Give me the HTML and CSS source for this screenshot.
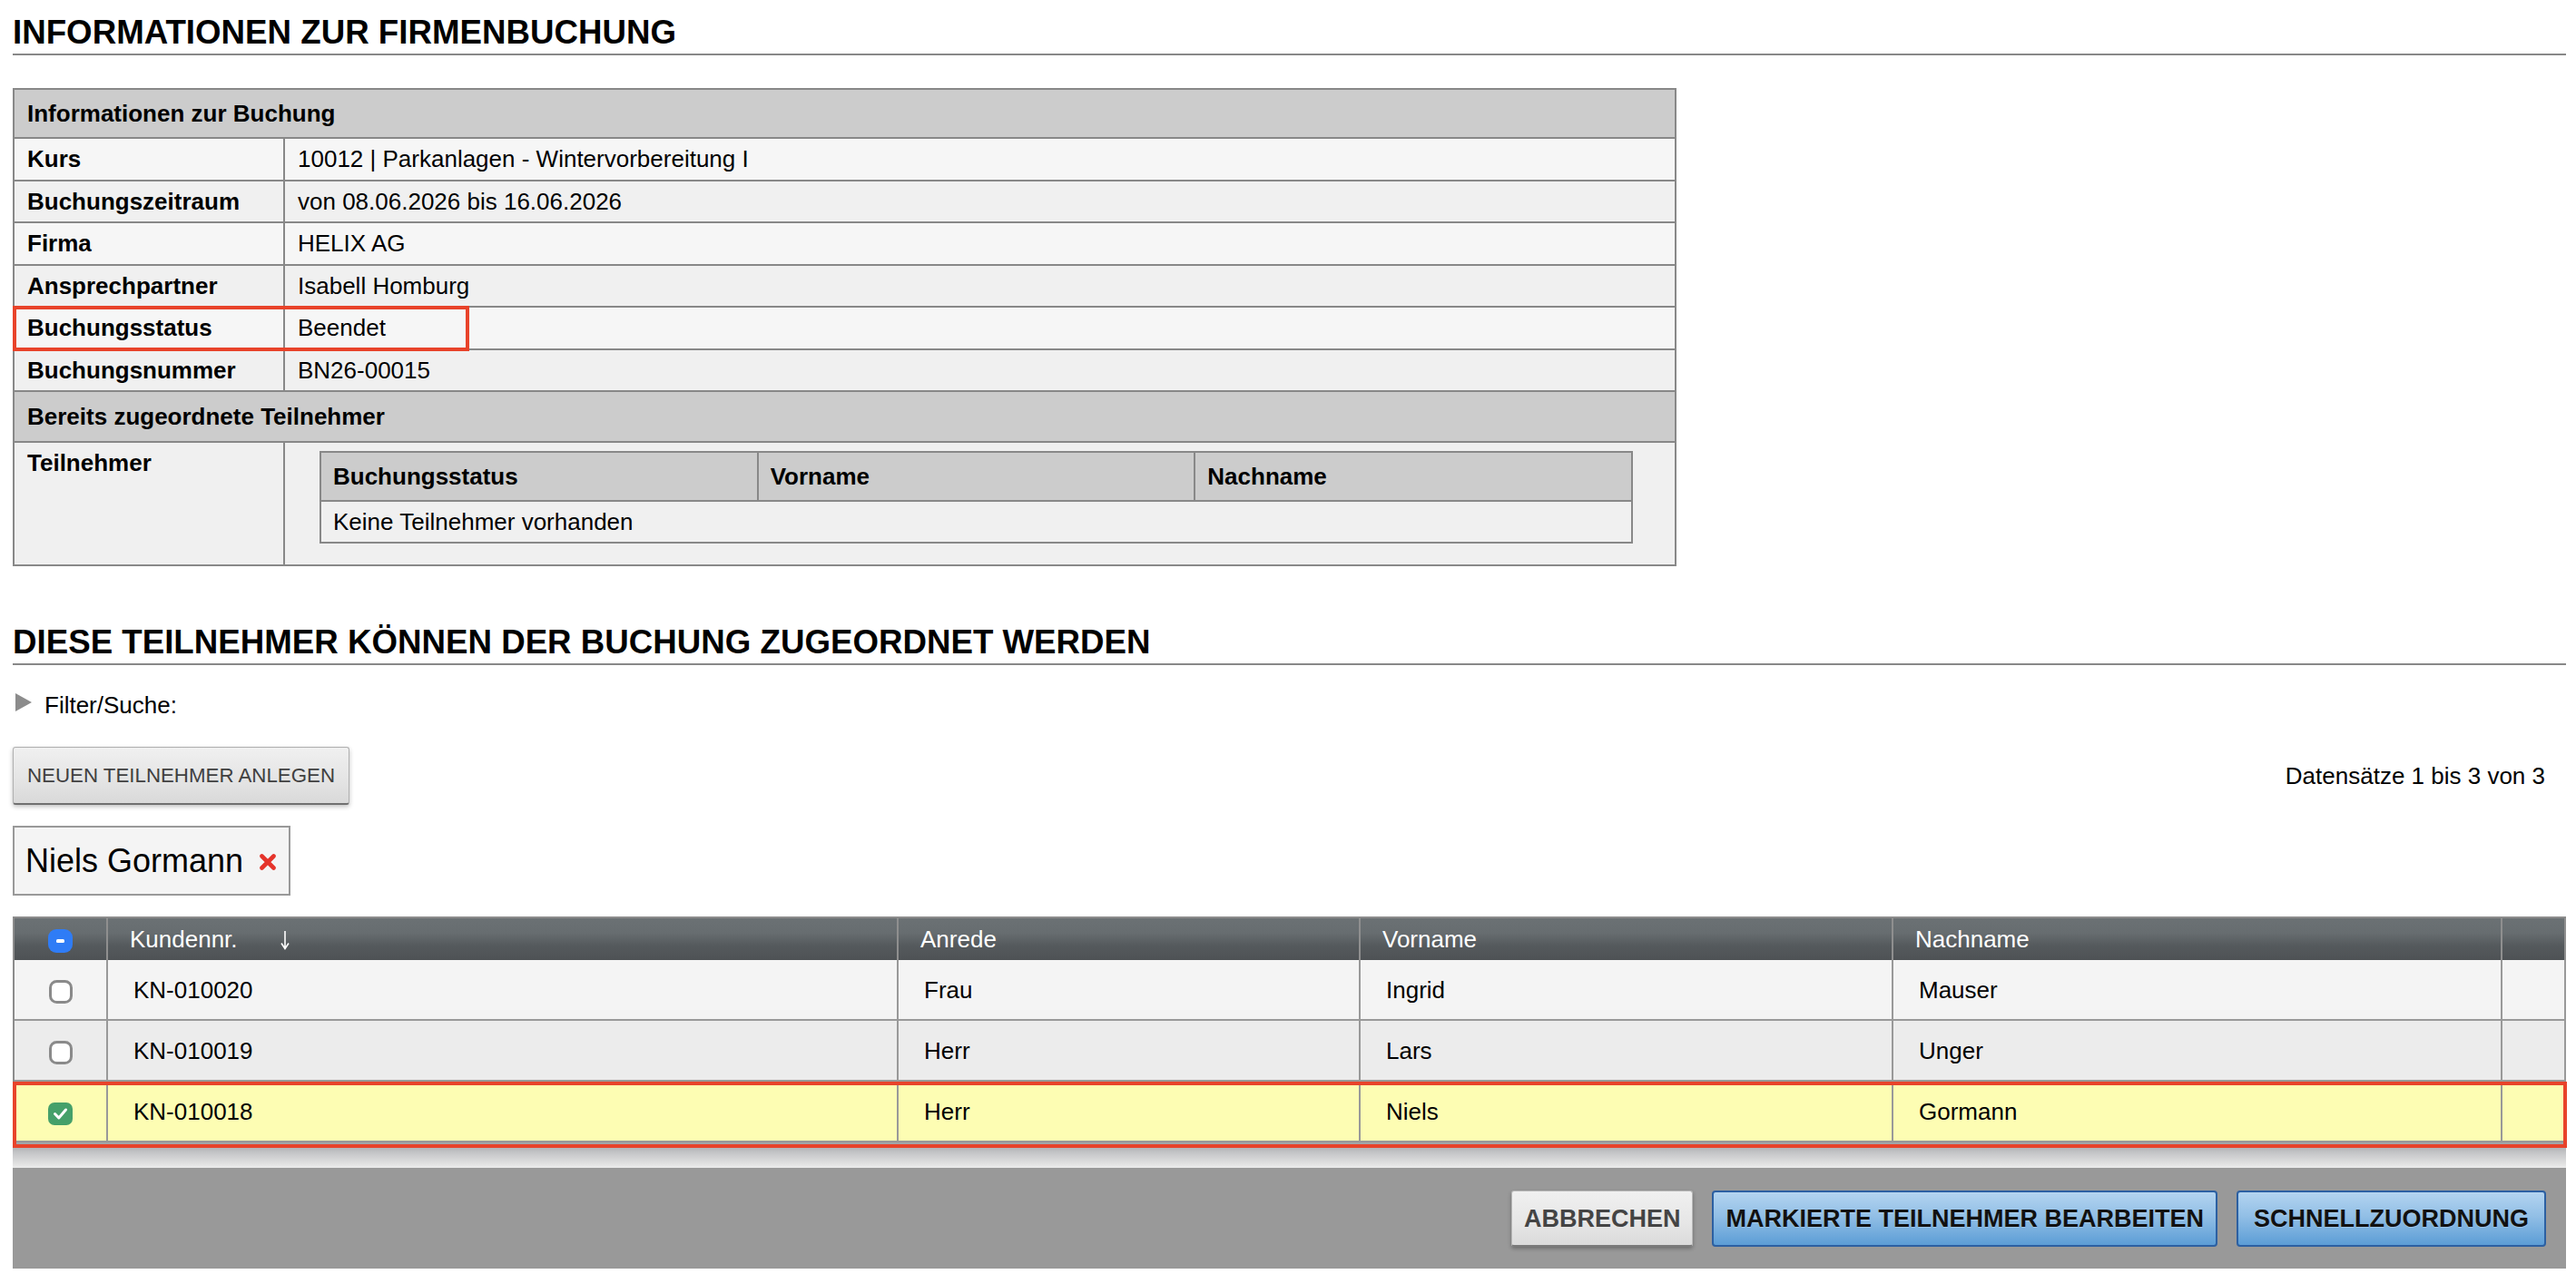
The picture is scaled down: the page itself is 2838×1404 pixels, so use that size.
FILE: index.html
```html
<!DOCTYPE html>
<html lang="de">
<head>
<meta charset="utf-8">
<title>Informationen zur Firmenbuchung</title>
<link rel="stylesheet" href="styles.css">
</head>
<body>
<div class="page">
  <h1 class="section-title">INFORMATIONEN ZUR FIRMENBUCHUNG</h1>

  <div class="info-wrap">
    <table class="info">
      <colgroup><col class="col-label"><col class="col-value"></colgroup>
      <tr class="head head-1"><th colspan="2">Informationen zur Buchung</th></tr>
      <tr class="row-a"><th>Kurs</th><td>10012 | Parkanlagen - Wintervorbereitung I</td></tr>
      <tr class="row-b"><th>Buchungszeitraum</th><td>von 08.06.2026 bis 16.06.2026</td></tr>
      <tr class="row-a"><th>Firma</th><td>HELIX AG</td></tr>
      <tr class="row-b"><th>Ansprechpartner</th><td>Isabell Homburg</td></tr>
      <tr class="row-a"><th>Buchungsstatus</th><td>Beendet</td></tr>
      <tr class="row-b"><th>Buchungsnummer</th><td>BN26-00015</td></tr>
      <tr class="head head-2"><th colspan="2">Bereits zugeordnete Teilnehmer</th></tr>
      <tr class="row-b participants">
        <th>Teilnehmer</th>
        <td class="participants-cell">
          <table class="inner">
            <tr class="inner-head"><th>Buchungsstatus</th><th>Vorname</th><th>Nachname</th></tr>
            <tr><td colspan="3">Keine Teilnehmer vorhanden</td></tr>
          </table>
        </td>
      </tr>
    </table>
    <div class="mark mark-status"></div>
  </div>

  <h2 class="section-title second">DIESE TEILNEHMER KÖNNEN DER BUCHUNG ZUGEORDNET WERDEN</h2>

  <div class="filter">
    <svg class="tri" width="18" height="20" viewBox="0 0 18 20"><polygon points="0,0 18,10 0,20" fill="#8c8c8c"/></svg>
    <span>Filter/Suche:</span>
  </div>

  <div class="toolbar">
    <button class="btn-light">NEUEN TEILNEHMER ANLEGEN</button>
    <span class="count">Datensätze 1 bis 3 von 3</span>
  </div>

  <div class="chip">
    <span>Niels Gormann</span>
    <svg class="chip-x" width="18" height="18" viewBox="0 0 18 18"><path d="M2.5 2.5 L15.5 15.5 M15.5 2.5 L2.5 15.5" stroke="#e5332a" stroke-width="4.6" stroke-linecap="round"/></svg>
  </div>

  <div class="grid-wrap">
    <table class="grid">
      <colgroup>
        <col class="g-c1"><col class="g-c2"><col class="g-c3"><col class="g-c4"><col class="g-c5"><col class="g-c6">
      </colgroup>
      <tr class="grid-head">
        <th class="cb"><svg width="27" height="26" viewBox="0 0 27 26"><rect x="0" y="0" width="27" height="26" rx="9" fill="#2f7cf6"/><rect x="9" y="11" width="9" height="4" rx="1.5" fill="#fff"/></svg></th>
        <th>Kundennr.<svg class="sort" width="12" height="22" viewBox="0 0 12 22"><path d="M6 1 V20 M2 14.5 L6 20.5 L10 14.5" stroke="#fff" stroke-width="1.6" fill="none"/></svg></th>
        <th>Anrede</th>
        <th>Vorname</th>
        <th>Nachname</th>
        <th></th>
      </tr>
      <tr class="g-row1">
        <td class="cb"><svg width="26" height="26" viewBox="0 0 26 26"><rect x="1.5" y="1.5" width="23" height="23" rx="7" fill="#fff" stroke="#8a8a8a" stroke-width="3"/></svg></td>
        <td>KN-010020</td><td>Frau</td><td>Ingrid</td><td>Mauser</td><td></td>
      </tr>
      <tr class="g-row2">
        <td class="cb"><svg width="26" height="26" viewBox="0 0 26 26"><rect x="1.5" y="1.5" width="23" height="23" rx="7" fill="#fff" stroke="#8a8a8a" stroke-width="3"/></svg></td>
        <td>KN-010019</td><td>Herr</td><td>Lars</td><td>Unger</td><td></td>
      </tr>
      <tr class="g-row3">
        <td class="cb"><svg width="27" height="25" viewBox="0 0 27 25"><rect x="0" y="0" width="27" height="25" rx="7" fill="#45a06a"/><path d="M7.5 12.5 L11.8 17 L19.5 8" stroke="#fff" stroke-width="3" fill="none" stroke-linecap="round" stroke-linejoin="round"/></svg></td>
        <td>KN-010018</td><td>Herr</td><td>Niels</td><td>Gormann</td><td></td>
      </tr>
    </table>
    <div class="mark mark-row"></div>
  </div>
  <div class="grid-shadow"></div>

  <div class="footer">
    <button class="btn-foot btn-grey">ABBRECHEN</button>
    <button class="btn-foot btn-blue">MARKIERTE TEILNEHMER BEARBEITEN</button>
    <button class="btn-foot btn-blue btn-wide">SCHNELLZUORDNUNG</button>
  </div>
</div>
</body>
</html>
```

FILE: styles.css
```css
* { box-sizing: border-box; }

body {
  margin: 0;
  background: #fff;
  color: #000;
  font-family: "Liberation Sans", Arial, Helvetica, sans-serif;
  font-size: 26px;
}

.page {
  padding: 0 11px 7px 14px;
}

.section-title {
  font-size: 36.7px;
  font-weight: bold;
  line-height: 42px;
  margin: 15px 0 0;
  padding-bottom: 2px;
  border-bottom: 2px solid #888;
}

.section-title.second {
  margin-top: 63px;
}

/* ---------- info table ---------- */
.info-wrap {
  position: relative;
  width: 1833px;
  margin-top: 36px;
}

.info {
  width: 1833px;
  table-layout: fixed;
  border-collapse: separate;
  border-spacing: 0;
  border-top: 2px solid #888;
  border-left: 2px solid #888;
}

.col-label { width: 298px; }

.info th,
.info td {
  border-right: 2px solid #888;
  border-bottom: 2px solid #888;
  text-align: left;
  vertical-align: middle;
  line-height: 30px;
  padding: 7.25px 14px;
  font-size: 26px;
}

.info th { font-weight: bold; }
.info td { font-weight: normal; }

.info .head th { background: #ccc; padding: 11px 14px; }
.info .head-2 th { padding: 12px 14px; }

.row-a th, .row-a td { background: #f6f6f6; }
.row-b th, .row-b td { background: #f0f0f0; }

.info .participants th { vertical-align: top; }
.info .participants-cell {
  vertical-align: top;
  padding: 9px 46px 23px 38px;
}

.inner {
  width: 100%;
  table-layout: fixed;
  border-collapse: separate;
  border-spacing: 0;
  border-top: 2px solid #888;
  border-left: 2px solid #888;
}

.info .inner th,
.info .inner td {
  border-right: 2px solid #888;
  border-bottom: 2px solid #888;
  padding: 7px 13px;
  line-height: 30px;
  background: #f0f0f0;
}

.info .inner .inner-head th {
  background: #ccc;
  padding: 11px 13px;
}

.mark {
  position: absolute;
  border: 4px solid #e8432a;
  pointer-events: none;
}

.mark-status {
  left: 0;
  top: 240px;
  width: 503px;
  height: 50px;
}

/* ---------- filter / toolbar ---------- */
.filter {
  display: flex;
  align-items: center;
  margin-top: 29px;
  line-height: 30px;
}

.filter .tri {
  margin: 0 14px 0 3px;
  position: relative;
  top: -3px;
}

.toolbar {
  display: flex;
  align-items: center;
  justify-content: space-between;
  margin-top: 31px;
  padding-right: 23px;
}

.btn-light {
  font-family: "Liberation Sans", Arial, sans-serif;
  font-size: 22.3px;
  color: #404040;
  line-height: 26px;
  height: 64px;
  padding: 0 12px;
  border: 1px solid #b0b0b0;
  border-bottom: 2px solid #707070;
  border-radius: 3px;
  background: linear-gradient(#f0f0f0, #e4e4e4 60%, #d9d9d9);
  box-shadow: 0 2px 5px rgba(0,0,0,0.25);
  width: 371px;
}

.count {
  line-height: 30px;
}

.chip {
  display: inline-flex;
  align-items: center;
  margin-top: 23px;
  border: 2px solid #999;
  background: #f4f4f4;
  font-size: 36px;
  line-height: 42px;
  padding: 16px 14px 15px 12px;
}

.chip-x {
  margin-left: 18px;
  position: relative;
  top: 1px;
}

/* ---------- grid ---------- */
.grid-wrap {
  position: relative;
  margin-top: 23px;
}

.grid {
  width: 2813px;
  table-layout: fixed;
  border-collapse: separate;
  border-spacing: 0;
  border-top: 2px solid #8c8c8c;
  border-left: 2px solid #8c8c8c;
}

.g-c1 { width: 103px; }
.g-c2 { width: 871px; }
.g-c3 { width: 509px; }
.g-c4 { width: 587px; }
.g-c5 { width: 671px; }
.g-c6 { width: 70px; }

.grid th {
  background: linear-gradient(#6b7174 0%, #676d70 35%, #555a5d 65%, #4e5255 100%);
  color: #fff;
  font-weight: normal;
  text-align: left;
  line-height: 30px;
  padding: 8px 24px;
  border-right: 2px solid #8f8f8f;
  white-space: nowrap;
}

.grid th.cb,
.grid td.cb {
  text-align: center;
  padding-left: 0;
  padding-right: 0;
}

.grid th.cb svg,
.grid td.cb svg {
  display: inline-block;
  vertical-align: middle;
}

.grid .sort {
  margin-left: 46px;
  vertical-align: middle;
  position: relative;
  top: -1px;
}

.grid td {
  line-height: 30px;
  padding: 17.5px 28px;
  border-right: 2px solid #999;
  border-bottom: 2px solid #999;
  vertical-align: middle;
}

.g-row1 td { background: #f4f4f4; }
.g-row2 td { background: #ececec; }
.g-row3 td { background: #fdfdb3; }

.mark-row {
  left: 0;
  right: -1px;
  top: 182px;
  height: 73px;
}

.grid-shadow {
  height: 28px;
  background: linear-gradient(#9ea1a4, #c4c5c7 40%, #e2e2e2 85%, #ececec);
}

/* ---------- footer ---------- */
.footer {
  background: #999;
  display: flex;
  justify-content: flex-end;
  gap: 21px;
  padding: 25px 22px 24px;
}

.btn-foot {
  font-family: "Liberation Sans", Arial, sans-serif;
  font-size: 27px;
  font-weight: bold;
  line-height: 30px;
  height: 62px;
  padding: 0 13px;
  border-radius: 3px;
}

.btn-grey {
  color: #444;
  border: 1px solid #b9b9b9;
  border-bottom: 2px solid #7a7a7a;
  background: linear-gradient(#f0f0f0, #e6e6e6 60%, #dadada);
  box-shadow: 0 2px 4px rgba(0,0,0,0.3);
}

.btn-blue {
  color: #111;
  border: 2px solid #2c60a2;
  background: linear-gradient(#b3d4f0, #92bfe6 45%, #5c9dd6);
  border-radius: 4px;
  text-shadow: 0 1px 0 rgba(255,255,255,0.25);
}

.btn-blue.btn-wide {
  padding: 0 17px;
}
```
